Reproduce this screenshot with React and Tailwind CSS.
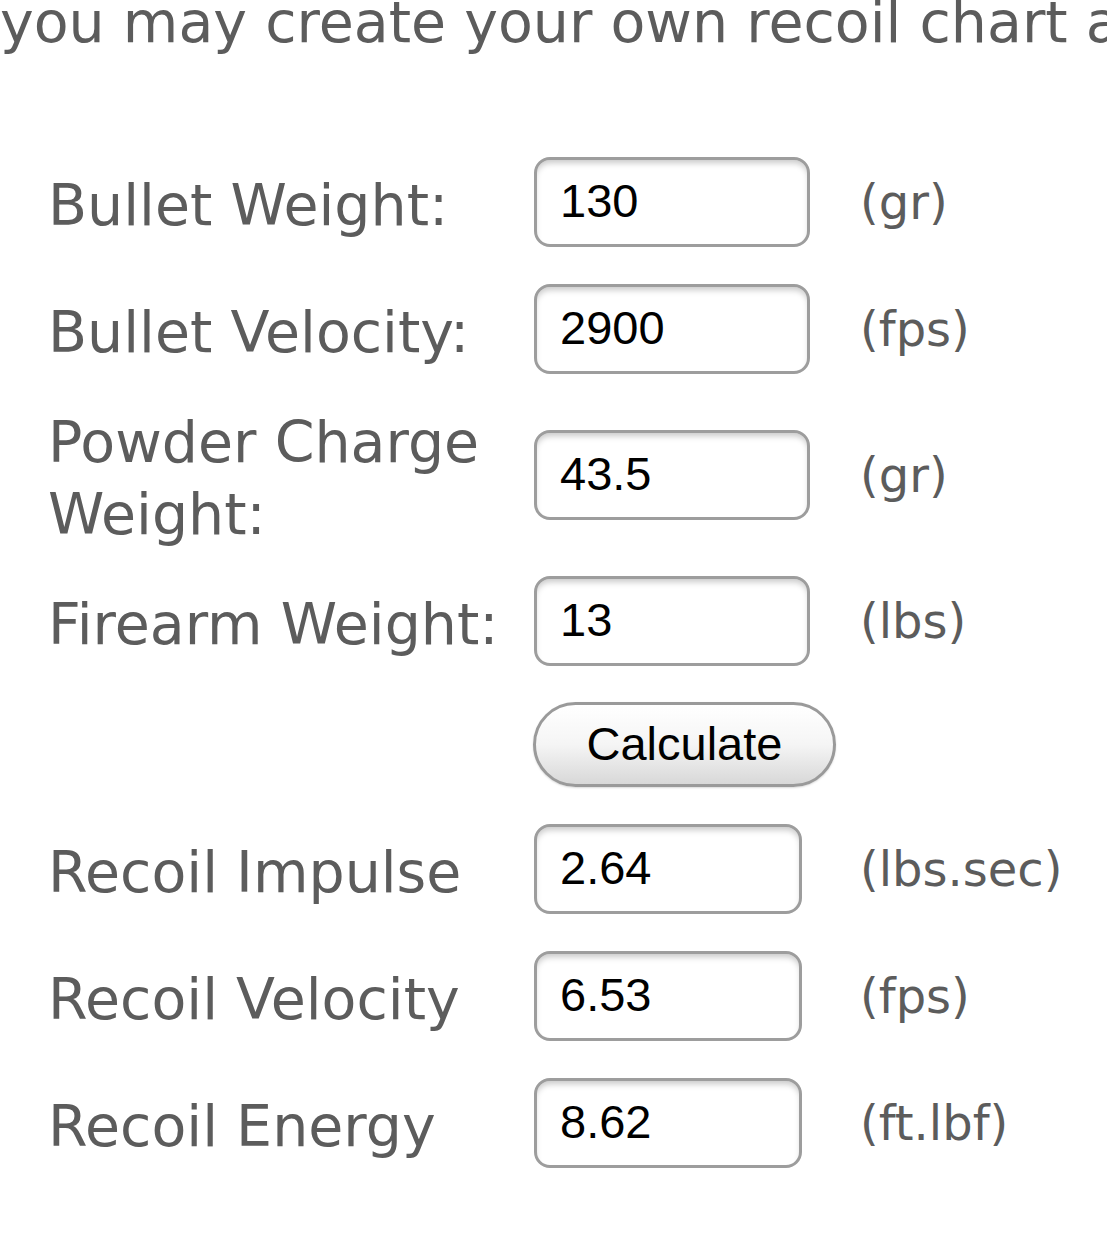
import React from "react";

const font = { fontFamily: '"DejaVu Sans", Verdana, sans-serif' };
const inFont = { fontFamily: '"Liberation Sans", Helvetica, Arial, sans-serif' };

function Field({ value, wide = true }) {
  return (
    <div
      className={`${wide ? "w-[276px]" : "w-[268px]"} h-[90px] rounded-[16px] border-[3px] border-[#9d9d9d] bg-white shadow-[inset_0_5px_6px_-2px_rgba(0,0,0,0.22)] flex items-center pl-[23px] text-[47px] text-black`}
      style={inFont}
    >
      {value}
    </div>
  );
}

function Row({ label, value, unit, wide, h = "h-[127px]" }) {
  return (
    <div className={`flex items-center pl-[48px] ${h}`}>
      <div className="w-[486px] pt-[6px] text-[57px] leading-[72px] text-[#5c5c5c]">{label}</div>
      <div className="w-[326px] flex">
        <Field value={value} wide={wide} />
      </div>
      <div className="text-[48px] text-[#5c5c5c]">{unit}</div>
    </div>
  );
}

export default function App() {
  return (
    <div className="w-[1107px] h-[1237px] overflow-hidden bg-white" style={font}>
      <p className="-mt-[14px] whitespace-nowrap text-[57px] leading-[72px] text-[#5c5c5c]">
        you may create your own recoil chart and compare
      </p>
      <div className="mt-[80px]">
        <Row label="Bullet Weight:" value="130" unit="(gr)" wide />
        <Row label="Bullet Velocity:" value="2900" unit="(fps)" wide />
        <Row
          label={
            <>
              Powder Charge
              <br />
              Weight:
            </>
          }
          value="43.5"
          unit="(gr)"
          wide
          h="h-[165px]"
        />
        <Row label="Firearm Weight:" value="13" unit="(lbs)" wide />
        <div className="flex items-center pl-[48px] h-[121px]">
          <div className="w-[485px]" />
          <button
            className="w-[303px] h-[85px] rounded-full border-[3px] border-[#9a9a9a] bg-gradient-to-b from-white via-[#f5f5f5] to-[#d8d8d8] text-[47px] text-black shadow-[0_1px_2px_rgba(0,0,0,0.15)]"
            style={inFont}
          >
            Calculate
          </button>
        </div>
        <Row label="Recoil Impulse" value="2.64" unit="(lbs.sec)" wide={false} />
        <Row label="Recoil Velocity" value="6.53" unit="(fps)" wide={false} />
        <Row label="Recoil Energy" value="8.62" unit="(ft.lbf)" wide={false} />
      </div>
    </div>
  );
}
